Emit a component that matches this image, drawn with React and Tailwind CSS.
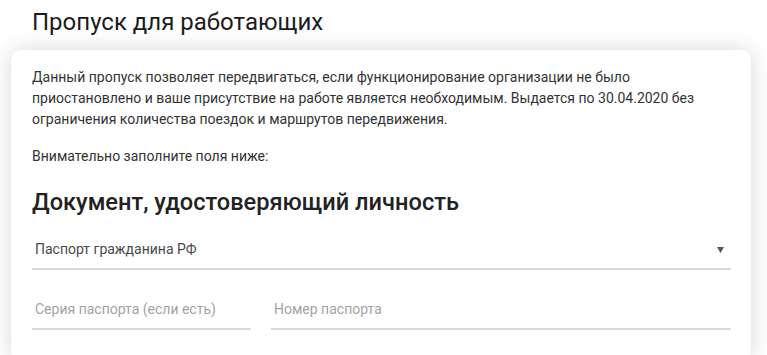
import React from 'react';

const Field = ({ placeholder, className }) => (
    <div className={`h-[39px] border-b-2 border-[#d9d9d9] flex items-center pl-[3px] ${className}`}>
        <span className="text-[14px] text-[#a3a3a3]">{placeholder}</span>
    </div>
);

const App = () => (
    <div className="min-h-screen bg-white font-['Roboto',sans-serif] text-[#333] overflow-hidden">
        <h1 className="pl-[32px] pt-[8px] h-[36px] text-[24px] leading-[28px] text-[#1c1c1c]">Пропуск для работающих</h1>
        <div className="mt-[14px] ml-[11px] w-[740px] bg-white rounded-[10px] shadow-[0_0_22px_rgba(0,0,0,0.16)] pl-[21px] pr-[20px] pt-[17px] pb-8">
            <p className="text-[14px] leading-[21px] text-[#333]">
                Данный пропуск позволяет передвигаться, если функционирование организации не было приостановлено и ваше присутствие на работе является необходимым. Выдается по 30.04.2020 без ограничения количества поездок и маршрутов передвижения.
            </p>
            <p className="mt-[16px] text-[14px] leading-[21px] text-[#333]">Внимательно заполните поля ниже:</p>
            <h2 className="mt-[21px] text-[23.6px] leading-[28px] font-medium text-[#222]">Документ, удостоверяющий личность</h2>
            <div className="mt-[15px] h-[39px] border-b-2 border-[#d9d9d9] flex items-center justify-between pl-[3px] pr-[7px]">
                <span className="text-[14px] text-[#4a4a4a]">Паспорт гражданина РФ</span>
                <svg width="7" height="6" viewBox="0 0 7 6"><path d="M0 0h7L3.5 6z" fill="#555" /></svg>
            </div>
            <div className="mt-[21px] flex gap-[20px]">
                <Field placeholder="Серия паспорта (если есть)" className="w-[219px]" />
                <Field placeholder="Номер паспорта" className="flex-1" />
            </div>
        </div>
    </div>
);

export default App;
